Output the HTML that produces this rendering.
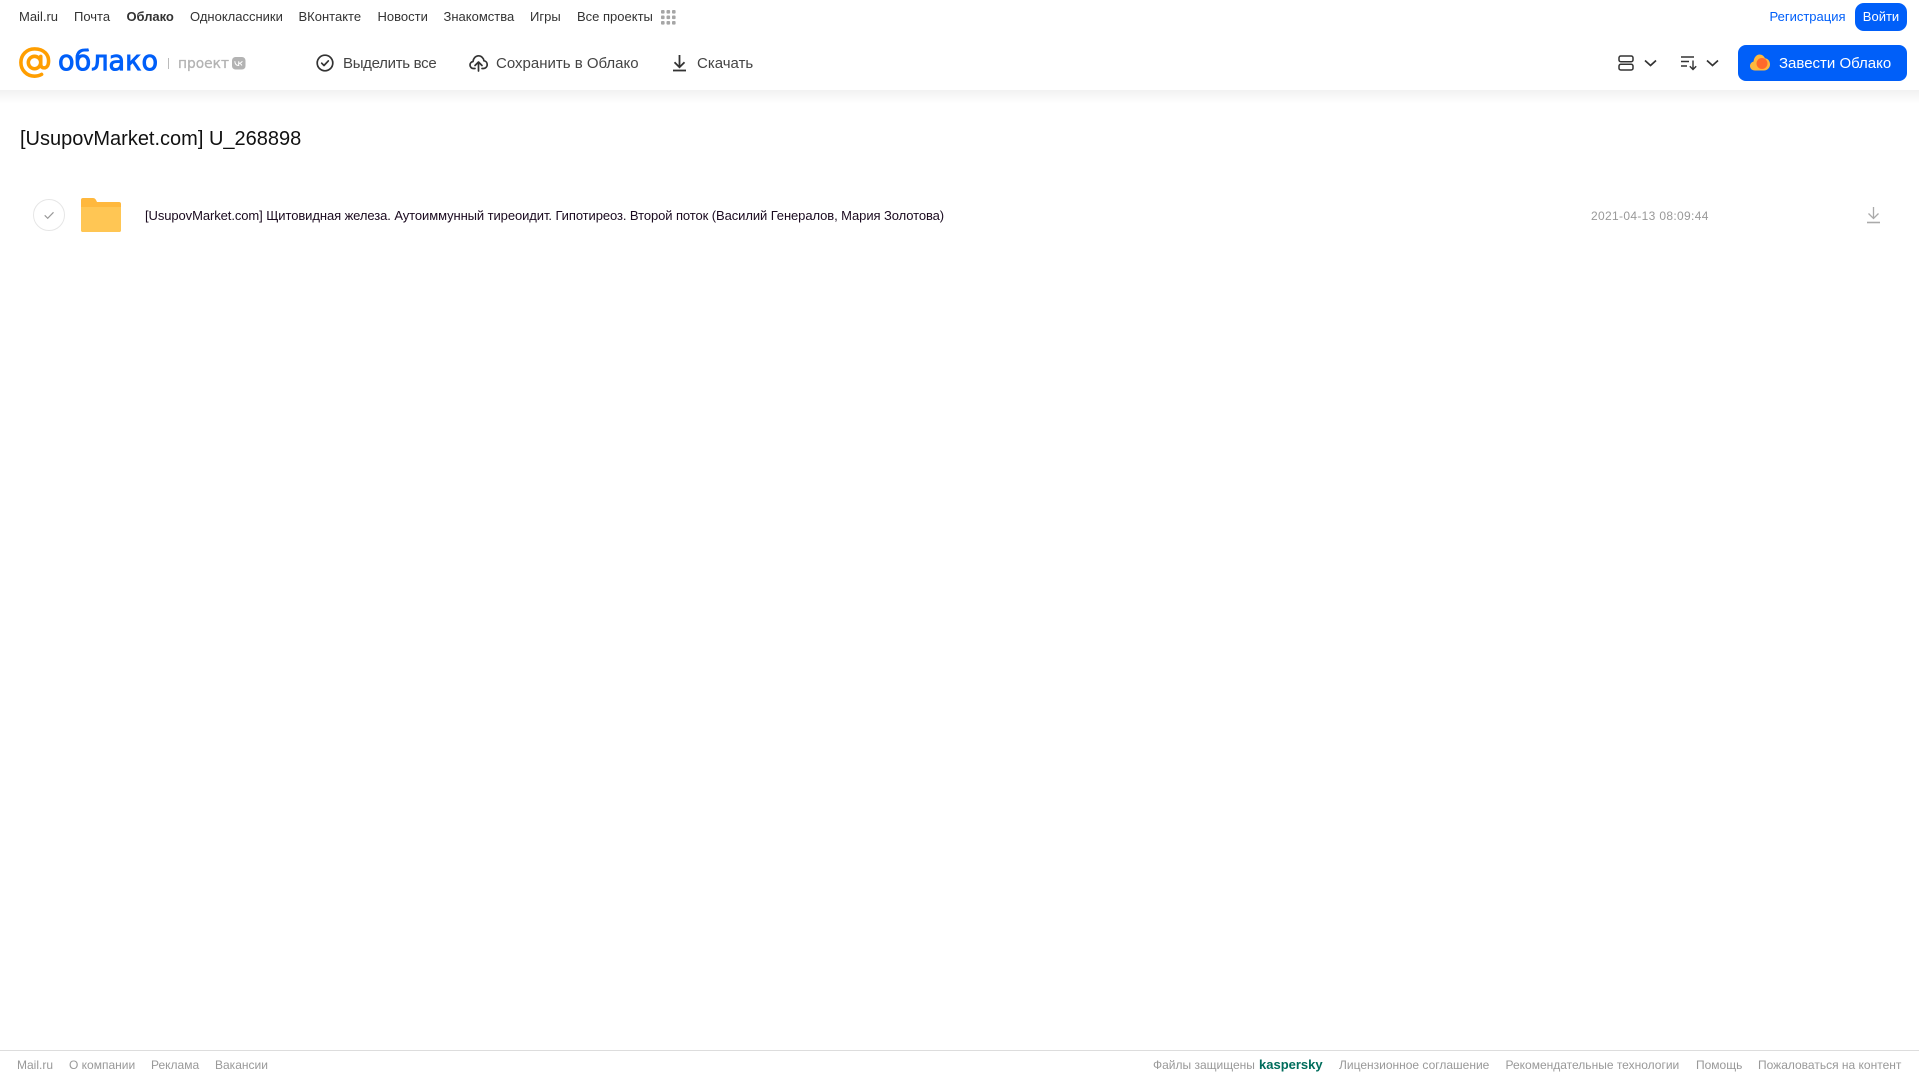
<!DOCTYPE html>
<html lang="ru"><head><meta charset="utf-8"><title>Облако</title>
<style>
html,body{margin:0;padding:0;width:1919px;height:1079px;overflow:hidden;background:#fff}
body{position:relative;font-family:"Liberation Sans",Arial,sans-serif;}
.t{position:absolute;white-space:nowrap;line-height:20px;height:20px}
.n{top:7px;font-size:13px;color:#333}
.b{top:53.500px;font-size:15px;color:#444}
.f{top:1055px;font-size:12px;color:#999}
svg{position:absolute;display:block}
#shadow{position:absolute;left:0;top:90px;width:1919px;height:14px;background:linear-gradient(#f1f1f1,#fff)}
#foot{position:absolute;left:0;top:1050px;width:1919px;height:1px;background:#ddd}
</style></head><body>
<div id="shadow"></div>
<div style="position:absolute;left:0;top:0;width:1919px;height:90px;background:#fff"></div>

<span class="t n" style="left:19px">Mail.ru</span>
<span class="t n" style="left:74px">Почта</span>
<span class="t n" style="left:126.500px;font-weight:bold;letter-spacing:-.05px">Облако</span>
<span class="t n" style="left:190px">Одноклассники</span>
<span class="t n" style="left:298.500px">ВКонтакте</span>
<span class="t n" style="left:377.500px">Новости</span>
<span class="t n" style="left:443.500px">Знакомства</span>
<span class="t n" style="left:530px">Игры</span>
<span class="t n" style="left:577px">Все проекты</span>
<svg style="left:661px;top:10px" width="15" height="15" fill="#a6a6a6"><rect x="0" y="0" width="3.6" height="3.6" rx="1"/><rect x="5.5" y="0" width="3.6" height="3.6" rx="1"/><rect x="11" y="0" width="3.6" height="3.6" rx="1"/><rect x="0" y="5.5" width="3.6" height="3.6" rx="1"/><rect x="5.5" y="5.5" width="3.6" height="3.6" rx="1"/><rect x="11" y="5.5" width="3.6" height="3.6" rx="1"/><rect x="0" y="11" width="3.6" height="3.6" rx="1"/><rect x="5.5" y="11" width="3.6" height="3.6" rx="1"/><rect x="11" y="11" width="3.6" height="3.6" rx="1"/></svg>

<span class="t n" style="left:1769.500px;color:#005ff9">Регистрация</span>
<div style="position:absolute;left:1855px;top:3px;width:52px;height:28px;background:#005ff9;border-radius:9px;color:#fff;font-size:13px;line-height:27px;text-align:center">Войти</div>

<svg style="left:19px;top:47px" width="32" height="32" viewBox="0 0 34 34" fill="none" stroke="#ff9e00" stroke-width="3.800" stroke-linecap="round"><circle cx="16.500" cy="16.500" r="6.600"/><path d="M23.100 10v8.500c0 5 6.900 5 8-.5C33 8 26 2 16.500 2 8 2 2 8.500 2 16.500S8 31 16.500 31c3 0 5.500-.7 7.500-1.900"/></svg>
<svg style="left:56px;top:40px" width="106" height="44"><text x="2" y="30" font-family="'DejaVu Sans',sans-serif" font-size="28" fill="#005ff9" stroke="#005ff9" stroke-width=".9" textLength="100" lengthAdjust="spacingAndGlyphs">облако</text></svg>
<div style="position:absolute;left:168px;top:58px;width:1px;height:11px;background:#bbb"></div>
<svg style="left:176px;top:50px" width="56" height="26"><text x="2" y="18" font-family="'DejaVu Sans',sans-serif" font-size="14" fill="#b3b3b3" stroke="#b3b3b3" stroke-width=".3" textLength="51" lengthAdjust="spacingAndGlyphs">проект</text></svg>
<svg style="left:232px;top:57px" width="14" height="13"><rect width="13.500" height="12.500" rx="3.500" fill="#b3b3b3"/><path d="M2.800 4.200c.2 2.800 1.500 4.300 3.900 4.300V4.300M6.700 6.300c1.200.1 2.500.9 3.200 2.200M10.300 4.200c-.4 1-1.600 1.900-3.600 2.100" fill="none" stroke="#fff" stroke-width="1"/></svg>

<svg style="left:316px;top:54px" width="18" height="18" viewBox="0 0 18 18" fill="none" stroke="#333" stroke-width="1.700"><circle cx="9" cy="9" r="7.800"/><path d="M5.700 9.200l2.300 2.300 4.300-4.600" stroke-linecap="round" stroke-linejoin="round"/></svg>
<span class="t b" style="left:343px;letter-spacing:-.3px">Выделить все</span>
<svg style="left:469px;top:54px" width="19" height="18" viewBox="0 0 19 18" fill="none" stroke="#333" stroke-width="1.700" stroke-linecap="round" stroke-linejoin="round"><path d="M6 14.500H4.500C2.500 14.500 1 13 1 11c0-1.800 1.300-3.200 3-3.500C4.500 4 6.800 1.800 9.500 1.800c2.700 0 5 2.100 5.500 5 2 .2 3.200 2 3.200 3.900 0 2-1.500 3.800-3.700 3.800H13"/><path d="M9.500 17V8.500M6 11.500l3.500-3.500 3.500 3.500"/></svg>
<span class="t b" style="left:496px">Сохранить в Облако</span>
<svg style="left:671.500px;top:54px" width="15" height="18" viewBox="0 0 15 18" fill="none" stroke="#333" stroke-width="1.800"><path d="M7.500 1v12M2.500 8.200l5 5 5-5"/><path d="M1 16.500h13"/></svg>
<span class="t b" style="left:697px">Скачать</span>

<svg style="left:1618px;top:55px" width="16" height="16" viewBox="0 0 16 16" fill="none" stroke="#333" stroke-width="1.500"><rect x="1" y="1" width="14" height="5.800" rx="1.800"/><rect x="1" y="9.200" width="14" height="5.800" rx="1.800"/></svg>
<svg style="left:1643.500px;top:59px" width="13" height="8" fill="none" stroke="#333" stroke-width="1.700"><path d="M1 1.500l5.500 5 5.500-5"/></svg>
<svg style="left:1681px;top:55px" width="17" height="16" viewBox="0 0 17 16" fill="none" stroke="#333" stroke-width="1.400"><path d="M0 2h13M0 6.500h8M0 11h6"/><path d="M12 5.500v9M8.800 11.300l3.200 3.200 3.200-3.200"/></svg>
<svg style="left:1705.500px;top:59px" width="13" height="8" fill="none" stroke="#333" stroke-width="1.700"><path d="M1 1.500l5.500 5 5.500-5"/></svg>

<div style="position:absolute;left:1738px;top:45px;width:169px;height:36px;background:#005ff9;border-radius:8px"></div>
<svg style="left:1750px;top:54px" width="20" height="17" viewBox="0 0 20 17"><path d="M5 16.500C2 16.500 0 14.500 0 12c0-2.200 1.500-4 3.500-4.400C4 3.500 6.500.5 9.500.5c2.500 0 4.500 1.500 5.500 3.800 2.800.3 5 2.800 5 6 0 3.500-2.500 6.200-6 6.200z" fill="#ffb83d"/><circle cx="12" cy="9.500" r="5.500" fill="#ff6a2b"/></svg>
<span class="t" style="left:1779px;top:53.500px;font-size:15px;color:#fff">Завести Облако</span>

<span class="t" style="left:20px;top:126px;height:26px;line-height:26px;font-size:20px;color:#111">[UsupovMarket.com] U_268898</span>

<svg style="left:33px;top:199px" width="32" height="32" viewBox="0 0 32 32" fill="none"><circle cx="16" cy="16" r="15.500" stroke="#e6e6e6"/><path d="M11.700 16.300l3 3 5.800-6" stroke="#999" stroke-width="1.200"/></svg>
<svg style="left:81px;top:198px" width="40" height="34" viewBox="0 0 40 34"><path d="M2 0h10c2 0 3 1.500 4 4h22a2 2 0 0 1 2 2v26a2 2 0 0 1-2 2H2a2 2 0 0 1-2-2V2a2 2 0 0 1 2-2z" fill="#ffb83d"/><path d="M0 9h40v23a2 2 0 0 1-2 2H2a2 2 0 0 1-2-2z" fill="#ffc654"/></svg>
<span class="t" style="left:145px;top:206px;font-size:13px;color:#1a0a1f;letter-spacing:-.085px">[UsupovMarket.com] Щитовидная железа. Аутоиммунный тиреоидит. Гипотиреоз. Второй поток (Василий Генералов, Мария Золотова)</span>
<span class="t" style="left:1591px;top:206px;font-size:12px;color:#999;letter-spacing:.33px">2021-04-13 08:09:44</span>
<svg style="left:1866px;top:206px" width="15" height="18" viewBox="0 0 15 18" fill="none" stroke="#aaa" stroke-width="1.300"><path d="M7.500 1v11.500M2.500 7.500l5 5 5-5"/><path d="M1 16.500h13" stroke-width="1.600"/></svg>

<div id="foot"></div>
<span class="t f" style="left:17px">Mail.ru</span>
<span class="t f" style="left:69px">О компании</span>
<span class="t f" style="left:151px">Реклама</span>
<span class="t f" style="left:215px">Вакансии</span>
<span class="t f" style="left:1153px">Файлы защищены</span>
<span class="t f" style="left:1259px;color:#006d5c;font-weight:bold;font-size:13px">kaspersky</span>
<span class="t f" style="left:1339px">Лицензионное соглашение</span>
<span class="t f" style="left:1505.500px">Рекомендательные технологии</span>
<span class="t f" style="left:1696px">Помощь</span>
<span class="t f" style="left:1758px">Пожаловаться на контент</span>
</body></html>
